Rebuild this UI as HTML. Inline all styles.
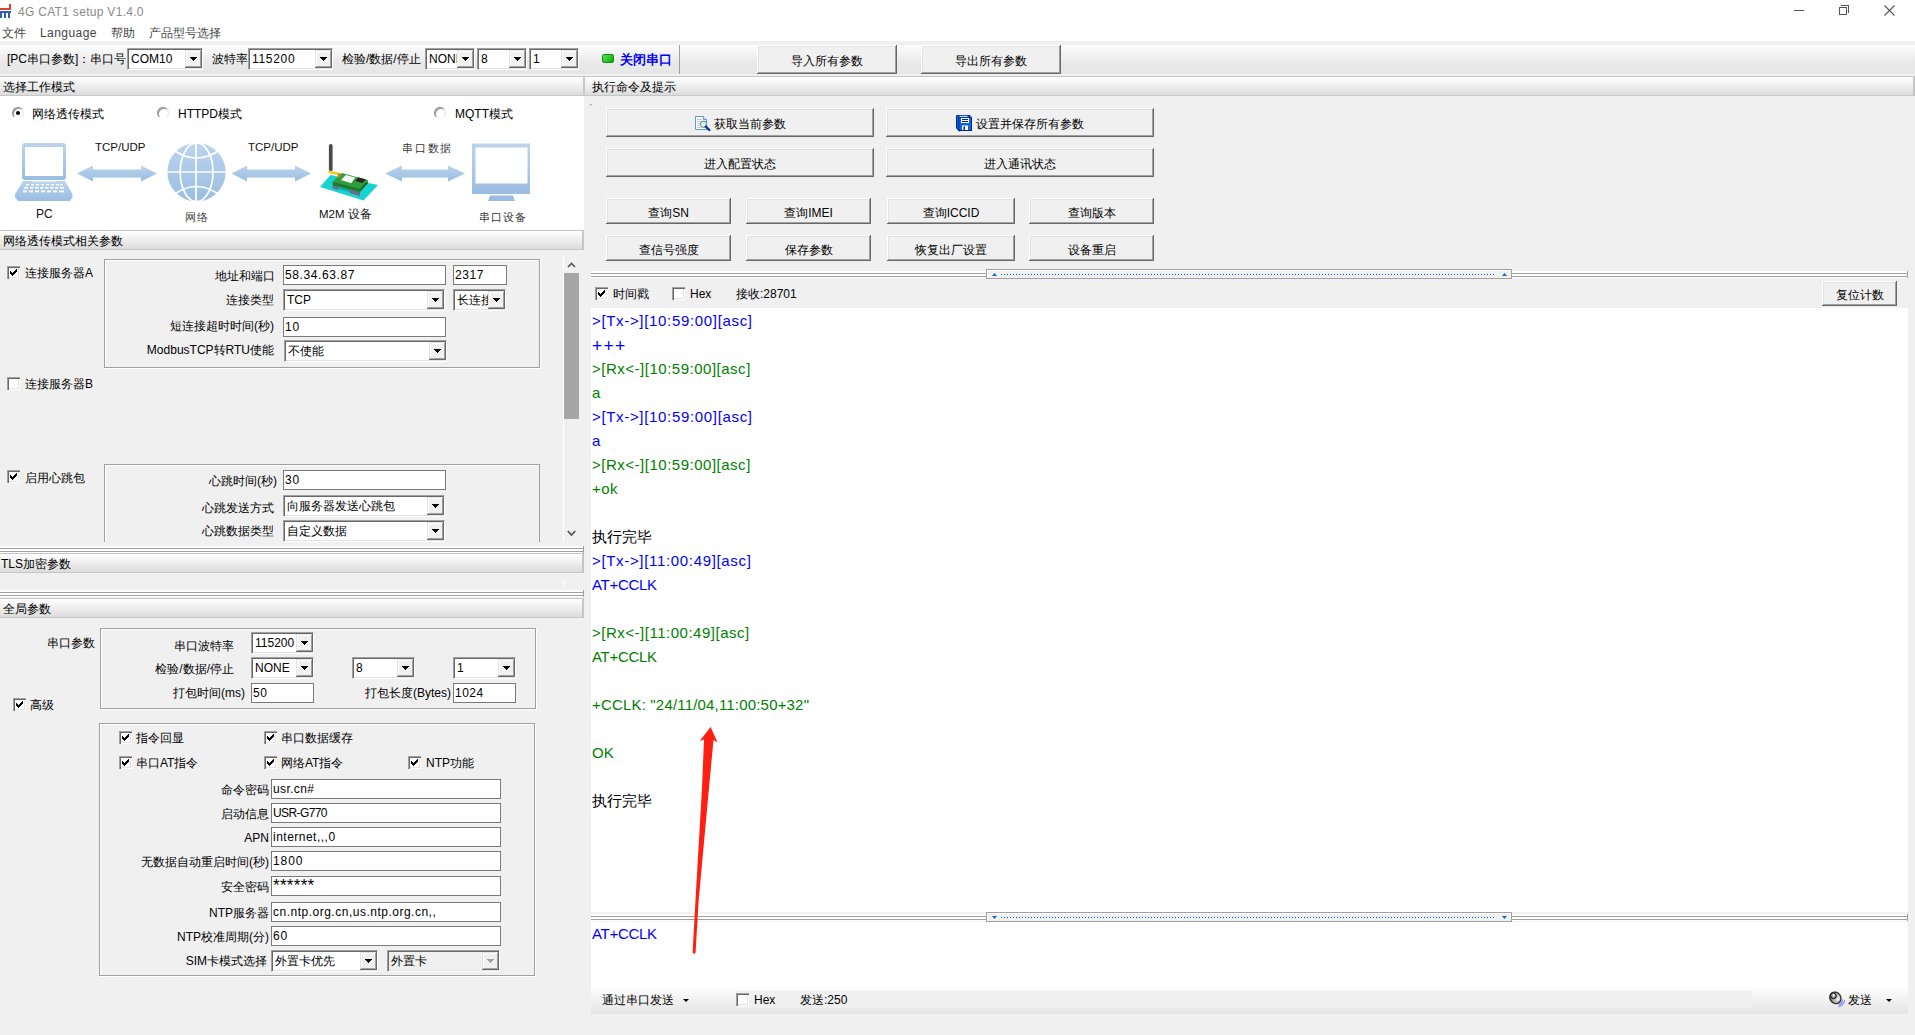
<!DOCTYPE html>
<html><head><meta charset="utf-8">
<style>
*{margin:0;padding:0;box-sizing:border-box}
html,body{width:1915px;height:1035px;overflow:hidden;background:#f0f0f0;font-family:"Liberation Sans",sans-serif;font-size:12px;color:#000}
.a{position:absolute;white-space:nowrap}
.t{position:absolute;white-space:nowrap;font-size:12px;line-height:14px}
.hdr{position:absolute;height:20px;background:linear-gradient(#ffffff,#dcdcdc);border-top:1px solid #c6c6c6;border-bottom:1px solid #c6c6c6;border-right:2px solid #c6c6c6;border-radius:0 1px 1px 0;font-size:12px;line-height:20px;padding-left:3px}
.split{position:absolute;height:7px;background:linear-gradient(#fff 0,#fff 2px,#a0a0a0 2px,#a0a0a0 3px,#fff 3px,#fff 5px,#a0a0a0 5px,#a0a0a0 6px,#fff 6px)}
.hnd{position:absolute;height:10px;width:526px;background:#f0f0f0;border:1px solid #a0a0a0;box-shadow:inset 1px 1px 0 #fff}
.edit{position:absolute;background:#fff;border:1px solid #7a7a7a;font-size:12px;line-height:17px;padding-top:1px;padding-left:1px;white-space:nowrap;overflow:hidden}
.combo{position:absolute;background:#fff;border-top:1px solid #a0a0a0;border-left:1px solid #a0a0a0;border-right:1px solid #fff;border-bottom:1px solid #fff;box-shadow:inset 1px 1px 0 #696969,inset -1px -1px 0 #e3e3e3;font-size:12px;line-height:21px;padding-left:3px;white-space:nowrap;overflow:hidden}
.dd{position:absolute;right:0;top:1px;bottom:1px;width:17px;background:#f0f0f0;box-shadow:inset -1px -1px 0 #696969,inset 1px 1px 0 #e3e3e3,inset -2px -2px 0 #a0a0a0,inset 2px 2px 0 #fff}
.dd:after{content:"";position:absolute;left:5px;top:7px;width:7px;height:4px;background:linear-gradient(#000,#000) 0 0/7px 1px no-repeat,linear-gradient(#000,#000) 1px 1px/5px 1px no-repeat,linear-gradient(#000,#000) 2px 2px/3px 1px no-repeat,linear-gradient(#000,#000) 3px 3px/1px 1px no-repeat}
.btn{position:absolute;padding-top:2px;background:#f0f0f0;box-shadow:inset -1px -1px 0 #696969,inset 1px 1px 0 #fff,inset -2px -2px 0 #a0a0a0,inset 2px 2px 0 #e3e3e3;font-size:12px;text-align:center;white-space:nowrap}
.cb{position:absolute;width:13px;height:13px;background:#fff;box-shadow:inset 1px 1px 0 #a0a0a0,inset 2px 2px 0 #696969,inset -1px -1px 0 #fff,inset -2px -2px 0 #e3e3e3}
.cb.on:after{content:"";position:absolute;left:3px;top:3px;width:1px;height:1px;margin:-0px;box-shadow:6px 0px 0 #000,5px 1px 0 #000,6px 1px 0 #000,0px 2px 0 #000,4px 2px 0 #000,5px 2px 0 #000,6px 2px 0 #000,0px 3px 0 #000,1px 3px 0 #000,3px 3px 0 #000,4px 3px 0 #000,5px 3px 0 #000,0px 4px 0 #000,1px 4px 0 #000,2px 4px 0 #000,3px 4px 0 #000,4px 4px 0 #000,1px 5px 0 #000,2px 5px 0 #000,3px 5px 0 #000,2px 6px 0 #000}
.grp{position:absolute;border:1px solid #a0a0a0;box-shadow:1px 1px 0 #fff, inset 1px 1px 0 #fff}
.rx{color:#008000}.tx{color:#0000ff}
.log{position:absolute;font-size:15px;line-height:24px;white-space:pre}
.rad{position:absolute;width:12px;height:12px;border-radius:50%;background:#fff;box-shadow:inset 1px 1px 0 #a0a0a0,inset -1px -1px 0 #fff;border:1px solid;border-color:#888 #e3e3e3 #fff #888}
.rad.on:after{content:"";position:absolute;left:3px;top:3px;width:4px;height:4px;border-radius:50%;background:#000}
.t.r{text-align:right}
.dis{background:#f0f0f0}
.dis .dd:after{background:linear-gradient(#a0a0a0,#a0a0a0) 0 0/7px 1px no-repeat,linear-gradient(#a0a0a0,#a0a0a0) 1px 1px/5px 1px no-repeat,linear-gradient(#a0a0a0,#a0a0a0) 2px 2px/3px 1px no-repeat,linear-gradient(#a0a0a0,#a0a0a0) 3px 3px/1px 1px no-repeat}

</style></head><body>
<!-- title bar -->
<div class="a" style="left:0;top:0;width:1915px;height:41px;background:#fff"></div>
<div class="t" style="left:18px;top:5px;color:#8a8a8a;font-size:12px;letter-spacing:0.3px">4G CAT1 setup V1.4.0</div>
<div class="t" style="left:2px;top:26px;color:#444">文件</div>
<div class="t" style="left:40px;top:26px;color:#444;letter-spacing:0.45px">Language</div>
<div class="t" style="left:111px;top:26px;color:#444">帮助</div>
<div class="t" style="left:149px;top:26px;color:#444">产品型号选择</div>

<!-- toolbar -->
<div class="a" style="left:0;top:45px;width:1915px;height:29px;background:linear-gradient(#fdfdfd,#e9e9e9 60%,#e6e6e6)"></div>


<!-- window controls -->
<div class="a" style="left:1794px;top:10px;width:10px;height:1px;background:#555"></div>
<div class="a" style="left:1839px;top:7px;width:8px;height:8px;border:1px solid #555"></div>
<div class="a" style="left:1841px;top:5px;width:8px;height:8px;border-top:1px solid #555;border-right:1px solid #555"></div>
<svg class="a" style="left:1884px;top:5px" width="11" height="11"><path d="M0.5 0.5L10.5 10.5M10.5 0.5L0.5 10.5" stroke="#555" stroke-width="1.1"/></svg>
<!-- app icon -->
<svg class="a" style="left:0;top:3px" width="12" height="16"><rect x="0" y="5" width="11" height="2" fill="#d9452a"/><rect x="9" y="1" width="2" height="5" fill="#d9452a"/><rect x="0" y="8" width="11" height="2" fill="#2a5db0"/><rect x="0" y="10" width="2" height="5" fill="#2a5db0"/><rect x="4" y="10" width="2" height="5" fill="#2a5db0"/><rect x="8" y="10" width="2" height="5" fill="#2a5db0"/></svg>

<!-- toolbar controls -->
<div class="t" style="left:7px;top:52px">[PC串口参数]：串口号</div>
<div class="combo" style="left:127px;top:48px;width:76px;height:22px">COM10<div class="dd"></div></div>
<div class="t" style="left:212px;top:52px">波特率</div>
<div class="combo" style="left:248px;top:48px;width:85px;height:22px;letter-spacing:0.7px">115200<div class="dd"></div></div>
<div class="t" style="left:342px;top:52px">检验/数据/停止</div>
<div class="combo" style="left:425px;top:48px;width:50px;height:22px">NONE<div class="dd"></div></div>
<div class="combo" style="left:477px;top:48px;width:50px;height:22px">8<div class="dd"></div></div>
<div class="combo" style="left:529px;top:48px;width:50px;height:22px">1<div class="dd"></div></div>
<div class="a" style="left:602px;top:54px;width:12px;height:9px;border-radius:2px;background:linear-gradient(135deg,#5fe05f,#0aa80a);border:1px solid #079207"></div>
<div class="t" style="left:620px;top:53px;color:#0000ff;font-weight:bold;font-size:13px">关闭串口</div>
<div class="a" style="left:679px;top:45px;width:1px;height:29px;background:#a0a0a0"></div>
<div class="btn" style="left:757px;top:45px;width:140px;height:29px;line-height:29px">导入所有参数</div>
<div class="btn" style="left:921px;top:45px;width:140px;height:29px;line-height:29px">导出所有参数</div>

<!-- headers -->
<div class="hdr" style="left:0;top:76px;width:585px">选择工作模式</div>
<div class="hdr" style="left:585px;top:76px;width:1330px;padding-left:7px">执行命令及提示</div>

<!-- left top white -->
<div class="a" style="left:0;top:96px;width:584px;height:134px;background:#fff"></div>

<!-- mode radios -->
<div class="rad on" style="left:12px;top:107px"></div><div class="t" style="left:32px;top:107px">网络透传模式</div>
<div class="rad" style="left:157px;top:107px"></div><div class="t" style="left:178px;top:107px">HTTPD模式</div>
<div class="rad" style="left:434px;top:107px"></div><div class="t" style="left:455px;top:107px">MQTT模式</div>
<!-- diagram -->
<div class="a" style="left:15px;top:136px;width:525px;height:94px;background:#fff"></div>
<svg class="a" style="left:0;top:130px" width="583" height="100" viewBox="0 130 583 100">
<defs><linearGradient id="bl" x1="0" y1="0" x2="0" y2="1"><stop offset="0" stop-color="#bcd4ee"/><stop offset="1" stop-color="#9bbde2"/></linearGradient></defs>
<!-- laptop -->
<rect x="22" y="143" width="44" height="37" rx="3" fill="url(#bl)"/>
<rect x="25" y="147" width="38" height="29" fill="#fff"/>
<path d="M23 181 L65 181 L72.5 194 L72.5 197 L70 201 L18 201 L15 197 L15 194 Z" fill="url(#bl)"/>
<rect x="32" y="180.5" width="24" height="1" fill="#fff"/>
<g fill="#fff"><rect x="26" y="184" width="3" height="1.5"/><rect x="31" y="184" width="3" height="1.5"/><rect x="36" y="184" width="3" height="1.5"/><rect x="41" y="184" width="3" height="1.5"/><rect x="46" y="184" width="3" height="1.5"/><rect x="51" y="184" width="3" height="1.5"/><rect x="56" y="184" width="3" height="1.5"/><rect x="60" y="184" width="3" height="1.5"/>
<rect x="24" y="187" width="4" height="1.6"/><rect x="30" y="187" width="3.5" height="1.6"/><rect x="35" y="187" width="3.5" height="1.6"/><rect x="40" y="187" width="3.5" height="1.6"/><rect x="45" y="187" width="3.5" height="1.6"/><rect x="50" y="187" width="3.5" height="1.6"/><rect x="55" y="187" width="3.5" height="1.6"/><rect x="60" y="187" width="4" height="1.6"/>
<rect x="23" y="190.5" width="4" height="1.8"/><rect x="29" y="190.5" width="4" height="1.8"/><rect x="35" y="190.5" width="4" height="1.8"/><rect x="41" y="190.5" width="4" height="1.8"/><rect x="47" y="190.5" width="4" height="1.8"/><rect x="53" y="190.5" width="4" height="1.8"/><rect x="59" y="190.5" width="5" height="1.8"/></g>
<!-- arrows -->
<path d="M77 173.5 L93 165.5 L93 169.5 L141 169.5 L141 165.5 L157 173.5 L141 181.5 L141 177.5 L93 177.5 L93 181.5 Z" fill="url(#bl)"/>
<path d="M231.5 173.5 L247 165.5 L247 169.5 L295 169.5 L295 165.5 L311 173.5 L295 181.5 L295 177.5 L247 177.5 L247 181.5 Z" fill="url(#bl)"/>
<path d="M385 173.5 L402 165.5 L402 169.5 L448 169.5 L448 165.5 L465 173.5 L448 181.5 L448 177.5 L402 177.5 L402 181.5 Z" fill="url(#bl)"/>
<!-- globe -->
<circle cx="196.5" cy="172.2" r="29.2" fill="url(#bl)"/>
<g fill="none" stroke="#fff" stroke-width="1.7">
<ellipse cx="196.6" cy="172.2" rx="16.4" ry="29.4"/>
<line x1="196" y1="142" x2="196" y2="202"/>
<line x1="166" y1="172" x2="227" y2="172"/>
<path d="M172 149 Q196.4 167 221 149"/>
<path d="M172 196 Q196.4 177 221 196"/>
</g>
<!-- monitor -->
<rect x="472" y="143.5" width="58" height="50.5" fill="url(#bl)"/>
<rect x="475.5" y="147.5" width="52" height="36" fill="#fff"/>
<path d="M490 195.5 L513 195.5 L515 201 L488 201 Z" fill="#9bbde2"/>
<!-- m2m device -->
<path d="M320 187 L330.5 175 L378 185 L363.5 200.5 Z" fill="#17d3d3"/>
<path d="M332.6 184.5 L360 192 L360 195 L332.6 187.5Z" fill="#11a8a8"/>
<path d="M333 185 L338 186.3 L338 190 L333 188.6Z" fill="#6f6a86"/>
<path d="M350 189.5 L360 192.2 L360 196 L350 193.3Z" fill="#6f6a86"/>
<path d="M332.6 181.7 L341.8 172.9 L367.8 180 L360 188.4 Z" fill="#2f9e3a"/>
<path d="M332.6 181.7 L360 188.4 L360 192 L332.6 185.3Z" fill="#1f7a2a"/>
<path d="M360 188.4 L367.8 180 L367.8 183.5 L360 192Z" fill="#1a6a24"/>
<path d="M341 180 L345.8 174.9 L355.3 177.6 L351.2 183.3 Z" fill="#f6f6f6"/>
<path d="M355.3 181 L358.3 177.3 L366 179.6 L362.7 183 Z" fill="#262626"/>
<rect x="328.9" y="144" width="3.7" height="27.5" rx="1.8" fill="#4a4a4a"/>
<path d="M328.3 170.2 L340.4 172.9 L340.4 175.8 L328.3 173.1 Z" fill="#e8d41a"/>
<rect x="337.8" y="173.5" width="2.6" height="4.1" fill="#c87a1a"/>
</svg>
<div class="t" style="left:95px;top:140px;font-size:11.5px;color:#111">TCP/UDP</div>
<div class="t" style="left:248px;top:140px;font-size:11.5px;color:#111">TCP/UDP</div>
<div class="t" style="left:402px;top:141px;font-size:10.5px;color:#333;letter-spacing:1.8px">串口数据</div>
<div class="t" style="left:36px;top:207px;font-size:12px;color:#111">PC</div>
<div class="t" style="left:185px;top:210px;font-size:11px;color:#444;letter-spacing:0.5px">网络</div>
<div class="t" style="left:319px;top:207px;font-size:11.5px;color:#111">M2M 设备</div>
<div class="t" style="left:479px;top:210px;font-size:10.5px;color:#333;letter-spacing:1px">串口设备</div>

<div class="hdr" style="left:0;top:230px;width:584px">网络透传模式相关参数</div>

<div class="split" style="left:0;top:546px;width:584px;border-right:1px solid #a0a0a0"></div>
<div class="hdr" style="left:0;top:553px;width:584px;padding-left:1px">TLS加密参数</div>
<div class="split" style="left:0;top:590px;width:584px;border-right:1px solid #a0a0a0"></div>
<div class="hdr" style="left:0;top:598px;width:584px">全局参数</div>


<!-- network params scroll area -->
<div class="cb on" style="left:7px;top:266px"></div><div class="t" style="left:25px;top:266px">连接服务器A</div>
<div class="grp" style="left:104px;top:259px;width:436px;height:109px"></div>
<div class="t r" style="right:1640px;top:269px">地址和端口</div>
<div class="edit" style="left:283px;top:265px;width:163px;height:20px;letter-spacing:0.6px">58.34.63.87</div>
<div class="edit" style="left:453px;top:265px;width:54px;height:20px;letter-spacing:0.6px">2317</div>
<div class="t r" style="right:1641px;top:293px">连接类型</div>
<div class="combo" style="left:283px;top:289px;width:162px;height:22px">TCP<div class="dd"></div></div>
<div class="combo" style="left:453px;top:289px;width:53px;height:22px">长连接<div class="dd"></div></div>
<div class="t r" style="right:1641px;top:319px">短连接超时时间(秒)</div>
<div class="edit" style="left:283px;top:317px;width:163px;height:20px;letter-spacing:0.8px">10</div>
<div class="t r" style="right:1641px;top:343px">ModbusTCP转RTU使能</div>
<div class="combo" style="left:284px;top:340px;width:163px;height:22px">不使能<div class="dd"></div></div>
<div class="cb" style="left:7px;top:377px"></div><div class="t" style="left:25px;top:377px">连接服务器B</div>
<div class="cb on" style="left:7px;top:470px"></div><div class="t" style="left:25px;top:471px">启用心跳包</div>
<div class="a" style="left:104px;top:464px;width:436px;height:78px;border:1px solid #a0a0a0;border-bottom:none;box-shadow:inset 1px 1px 0 #fff"></div>
<div class="t r" style="right:1638px;top:474px">心跳时间(秒)</div>
<div class="edit" style="left:283px;top:470px;width:163px;height:20px;letter-spacing:0.8px">30</div>
<div class="t r" style="right:1641px;top:501px">心跳发送方式</div>
<div class="combo" style="left:283px;top:495px;width:162px;height:22px">向服务器发送心跳包<div class="dd"></div></div>
<div class="t r" style="right:1641px;top:524px">心跳数据类型</div>
<div class="combo" style="left:283px;top:520px;width:162px;height:22px">自定义数据<div class="dd"></div></div>
<!-- scrollbar -->
<div class="a" style="left:563px;top:256px;width:1px;height:286px;background:#fff"></div>
<svg class="a" style="left:566px;top:260px" width="11" height="10"><path d="M2 7 L5.5 3.5 L9 7" fill="none" stroke="#555" stroke-width="1.6"/></svg>
<div class="a" style="left:564px;top:273px;width:15px;height:146px;background:#a6a6a6"></div>
<svg class="a" style="left:566px;top:528px" width="11" height="11"><path d="M1.8 3 L5.5 7 L9.2 3" fill="none" stroke="#555" stroke-width="1.8"/></svg>
<div class="a" style="left:563px;top:579px;width:1px;height:8px;background:#fff"></div>

<!-- global params -->
<div class="t r" style="right:1820px;top:636px">串口参数</div>
<div class="grp" style="left:100px;top:628px;width:436px;height:81px"></div>
<div class="t r" style="right:1681px;top:639px">串口波特率</div>
<div class="combo" style="left:251px;top:632px;width:63px;height:22px">115200<div class="dd"></div></div>
<div class="t r" style="right:1681px;top:662px">检验/数据/停止</div>
<div class="combo" style="left:251px;top:657px;width:63px;height:22px">NONE<div class="dd"></div></div>
<div class="combo" style="left:352px;top:657px;width:63px;height:22px">8<div class="dd"></div></div>
<div class="combo" style="left:453px;top:657px;width:63px;height:22px">1<div class="dd"></div></div>
<div class="t r" style="right:1670px;top:686px">打包时间(ms)</div>
<div class="edit" style="left:251px;top:683px;width:63px;height:20px;letter-spacing:0.5px">50</div>
<div class="t r" style="right:1464px;top:686px">打包长度(Bytes)</div>
<div class="edit" style="left:453px;top:683px;width:63px;height:20px;letter-spacing:0.5px">1024</div>
<div class="cb on" style="left:13px;top:698px"></div><div class="t" style="left:30px;top:698px">高级</div>
<div class="grp" style="left:99px;top:723px;width:436px;height:253px"></div>
<div class="cb on" style="left:119px;top:731px"></div><div class="t" style="left:136px;top:731px">指令回显</div>
<div class="cb on" style="left:264px;top:731px"></div><div class="t" style="left:281px;top:731px">串口数据缓存</div>
<div class="cb on" style="left:119px;top:756px"></div><div class="t" style="left:136px;top:756px">串口AT指令</div>
<div class="cb on" style="left:264px;top:756px"></div><div class="t" style="left:281px;top:756px">网络AT指令</div>
<div class="cb on" style="left:408px;top:756px"></div><div class="t" style="left:426px;top:756px">NTP功能</div>
<div class="t r" style="right:1646px;top:783px">命令密码</div>
<div class="edit" style="left:271px;top:779px;width:230px;height:20px;letter-spacing:0.37px">usr.cn#</div>
<div class="t r" style="right:1646px;top:807px">启动信息</div>
<div class="edit" style="left:271px;top:803px;width:230px;height:20px;letter-spacing:-0.6px">USR-G770</div>
<div class="t r" style="right:1646px;top:831px">APN</div>
<div class="edit" style="left:271px;top:827px;width:230px;height:20px;letter-spacing:0.49px">internet,,,0</div>
<div class="t r" style="right:1646px;top:855px">无数据自动重启时间(秒)</div>
<div class="edit" style="left:271px;top:851px;width:230px;height:20px;letter-spacing:0.9px">1800</div>
<div class="t r" style="right:1646px;top:880px">安全密码</div>
<div class="edit" style="left:271px;top:876px;width:230px;height:20px"><span style="position:absolute;left:1px;top:0;font-size:17px;line-height:17px;letter-spacing:0.3px">******</span></div>
<div class="t r" style="right:1646px;top:906px">NTP服务器</div>
<div class="edit" style="left:271px;top:902px;width:230px;height:20px;letter-spacing:0.5px">cn.ntp.org.cn,us.ntp.org.cn,,</div>
<div class="t r" style="right:1646px;top:930px">NTP校准周期(分)</div>
<div class="edit" style="left:271px;top:926px;width:230px;height:20px;letter-spacing:0.8px">60</div>
<div class="t r" style="right:1648px;top:954px">SIM卡模式选择</div>
<div class="combo" style="left:271px;top:950px;width:107px;height:22px">外置卡优先<div class="dd"></div></div>
<div class="combo dis" style="left:387px;top:950px;width:113px;height:22px">外置卡<div class="dd"></div></div>


<!-- command buttons -->
<div class="btn" style="left:606px;top:108px;width:268px;height:29px;line-height:29px"><span style="padding-left:19px">获取当前参数</span></div><svg class="a" style="left:694px;top:115px" width="17" height="17" viewBox="694 115 17 17"><path d="M695.5 116.5 H703.5 L706.5 119.5 V129.5 H695.5 Z" fill="#fff" stroke="#5b9bd5" stroke-width="1"/><path d="M703.5 116.5 V119.5 H706.5" fill="#e8f0f8" stroke="#5b9bd5"/><g stroke="#c8c8c8" stroke-width="1"><line x1="697" y1="119.5" x2="702" y2="119.5"/><line x1="697" y1="121.5" x2="701" y2="121.5"/><line x1="697" y1="123.5" x2="700" y2="123.5"/><line x1="697" y1="125.5" x2="700" y2="125.5"/><line x1="697" y1="127.5" x2="701" y2="127.5"/></g><circle cx="703.6" cy="124.3" r="3.2" fill="#c8f8f8" stroke="#777" stroke-width="1"/><path d="M705.8 126.6 L709.3 130" stroke="#0a2fa0" stroke-width="2.4" stroke-linecap="round"/></svg>
<div class="btn" style="left:886px;top:108px;width:268px;height:29px;line-height:29px"><span style="padding-left:20px">设置并保存所有参数</span></div><svg class="a" style="left:955px;top:114px" width="19" height="18" viewBox="955 114 19 18"><path d="M956.5 115.5 H970 V128 L959 131 L956.5 128 Z" fill="#0a68d0" stroke="#0020a0"/><rect x="958.8" y="117.3" width="12.7" height="13.2" fill="#0a68d0" stroke="#0020a0"/><rect x="961" y="118" width="8" height="5" fill="#fff"/><line x1="962" y1="119.5" x2="968" y2="119.5" stroke="#0020a0"/><line x1="962" y1="121.5" x2="968" y2="121.5" stroke="#0020a0"/><rect x="962" y="125.5" width="6" height="4.5" fill="#fff"/><rect x="963.5" y="126.5" width="1.5" height="3.5" fill="#0020a0"/><rect x="959.5" y="115.8" width="8" height="1" fill="#fff"/></svg>
<div class="btn" style="left:606px;top:148px;width:268px;height:29px;line-height:29px">进入配置状态</div>
<div class="btn" style="left:886px;top:148px;width:268px;height:29px;line-height:29px">进入通讯状态</div>
<div class="btn" style="left:606px;top:198px;width:125px;height:26px;line-height:26px">查询SN</div>
<div class="btn" style="left:746px;top:198px;width:125px;height:26px;line-height:26px">查询IMEI</div>
<div class="btn" style="left:887px;top:198px;width:128px;height:26px;line-height:26px">查询ICCID</div>
<div class="btn" style="left:1029px;top:198px;width:125px;height:26px;line-height:26px">查询版本</div>
<div class="btn" style="left:606px;top:235px;width:125px;height:26px;line-height:26px">查信号强度</div>
<div class="btn" style="left:746px;top:235px;width:125px;height:26px;line-height:26px">保存参数</div>
<div class="btn" style="left:887px;top:235px;width:128px;height:26px;line-height:26px">恢复出厂设置</div>
<div class="btn" style="left:1029px;top:235px;width:125px;height:26px;line-height:26px">设备重启</div>
<div class="a" style="left:590px;top:104px;width:2px;height:2px;border-top:1px solid #b0b0b0;border-left:1px solid #b0b0b0"></div>

<!-- receive options -->
<div class="cb on" style="left:595px;top:287px"></div><div class="t" style="left:613px;top:287px">时间戳</div>
<div class="cb" style="left:672px;top:287px"></div><div class="t" style="left:690px;top:287px">Hex</div>
<div class="t" style="left:736px;top:287px">接收:28701</div>
<div class="btn" style="left:1822px;top:281px;width:75px;height:25px;line-height:25px">复位计数</div>

<!-- right log -->
<div class="split" style="left:591px;top:271px;width:1317px;border-right:1px solid #a0a0a0"></div>
<div class="hnd" style="left:986px;top:269px"></div><svg class="a" style="left:0;top:0" width="1915" height="1035"><path d="M992 276 L994.5 273 L997 276 Z" fill="#0a6ad0"/><path d="M1502 276 L1504.5 273 L1507 276 Z" fill="#0a6ad0"/><line x1="1001" y1="274.5" x2="1495" y2="274.5" stroke="#0a6ad0" stroke-width="1" stroke-dasharray="1 2"/></svg>
<div class="a" style="left:591px;top:308px;width:1317px;height:604px;background:#fff"></div>
<div class="log tx" style="left:592px;top:309px;letter-spacing:0.67px">&gt;[Tx-&gt;][10:59:00][asc]</div>
<div class="log tx" style="left:592px;top:334px;letter-spacing:1.3px;font-size:17.5px">+++</div>
<div class="log rx" style="left:592px;top:357px;letter-spacing:0.51px">&gt;[Rx&lt;-][10:59:00][asc]</div>
<div class="log rx" style="left:592px;top:381px;letter-spacing:0px">a</div>
<div class="log tx" style="left:592px;top:405px;letter-spacing:0.67px">&gt;[Tx-&gt;][10:59:00][asc]</div>
<div class="log tx" style="left:592px;top:429px;letter-spacing:0px">a</div>
<div class="log rx" style="left:592px;top:453px;letter-spacing:0.51px">&gt;[Rx&lt;-][10:59:00][asc]</div>
<div class="log rx" style="left:592px;top:477px;letter-spacing:0.45px">+ok</div>
<div class="log bk" style="left:592px;top:525px;letter-spacing:0px">执行完毕</div>
<div class="log tx" style="left:592px;top:549px;letter-spacing:0.67px">&gt;[Tx-&gt;][11:00:49][asc]</div>
<div class="log tx" style="left:592px;top:573px;letter-spacing:-0.3px">AT+CCLK</div>
<div class="log rx" style="left:592px;top:621px;letter-spacing:0.51px">&gt;[Rx&lt;-][11:00:49][asc]</div>
<div class="log rx" style="left:592px;top:645px;letter-spacing:-0.3px">AT+CCLK</div>
<div class="log rx" style="left:592px;top:693px;letter-spacing:0.18px">+CCLK: &quot;24/11/04,11:00:50+32&quot;</div>
<div class="log rx" style="left:592px;top:741px;letter-spacing:0px">OK</div>
<div class="log bk" style="left:592px;top:789px;letter-spacing:0px">执行完毕</div>

<div class="a" style="left:591px;top:912px;width:1317px;height:10px;background:#f0f0f0"></div>
<div class="split" style="left:591px;top:914px;width:1317px;border-right:1px solid #a0a0a0"></div>
<div class="hnd" style="left:986px;top:912px"></div><svg class="a" style="left:0;top:0" width="1915" height="1035"><path d="M992 916 L994.5 919 L997 916 Z" fill="#0a6ad0"/><path d="M1502 916 L1504.5 919 L1507 916 Z" fill="#0a6ad0"/><line x1="1001" y1="917.5" x2="1495" y2="917.5" stroke="#0a6ad0" stroke-width="1" stroke-dasharray="1 2"/></svg>
<div class="a" style="left:591px;top:922px;width:1317px;height:64px;background:#fff"></div>
<div class="log tx" style="left:592px;top:922px;letter-spacing:-0.3px">AT+CCLK</div>
<div class="a" style="left:591px;top:986px;width:1317px;height:28px;background:linear-gradient(#ffffff,#e4e4e4)"></div>
<div class="a" style="left:736px;top:991px;width:1016px;height:17px;background:#f0f0f0"></div>
<div class="t" style="left:602px;top:993px">通过串口发送</div>
<div class="a" style="left:683px;top:999px;border-left:3px solid transparent;border-right:3px solid transparent;border-top:3px solid #000"></div>
<div class="cb" style="left:736px;top:993px"></div><div class="t" style="left:754px;top:993px">Hex</div>
<div class="t" style="left:800px;top:993px">发送:250</div>
<svg class="a" style="left:1827px;top:989px" width="20" height="20" viewBox="1827 989 20 20"><defs><radialGradient id="sp" cx="0.65" cy="0.7" r="0.7"><stop offset="0" stop-color="#f4f4f4"/><stop offset="0.6" stop-color="#b0b0b0"/><stop offset="1" stop-color="#555"/></radialGradient></defs><ellipse cx="1835.3" cy="997.8" rx="5.4" ry="6" transform="rotate(-35 1835.3 997.8)" fill="url(#sp)" stroke="#2a2a2a" stroke-width="1.2"/><ellipse cx="1833.4" cy="995.7" rx="2.6" ry="3" transform="rotate(-35 1833.4 995.7)" fill="#9a9a9a" stroke="#1a1a1a" stroke-width="1"/><circle cx="1833.7" cy="995.4" r="1.1" fill="#fff"/><path d="M1838.3 1004.7 Q1841.8 1003.8 1842.6 999.3" fill="none" stroke="#8080f0" stroke-width="1.3"/><path d="M1838.3 1006.7 Q1843.3 1005.8 1844.9 1000" fill="none" stroke="#9090ff" stroke-width="1.3"/></svg><div class="t" style="left:1848px;top:993px">发送</div>
<div class="a" style="left:1886px;top:999px;border-left:3.5px solid transparent;border-right:3.5px solid transparent;border-top:3.5px solid #000"></div>
<!-- red arrow -->
<svg class="a" style="left:0;top:0" width="1915" height="1035"><path d="M710.6 727 L717.5 742.4 L713.5 740 L708.8 790 L698.7 900 L695.6 952.5 Q694.2 955 692.6 952.5 L695.5 900 L701.9 790 L704 739.6 L699.7 741 Z" fill="#ff1e12"/></svg>
</body></html>
